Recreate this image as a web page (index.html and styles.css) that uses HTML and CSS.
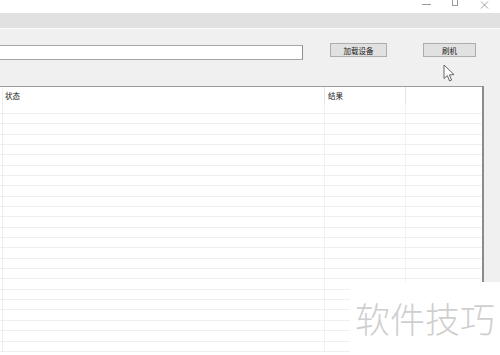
FILE: index.html
```html
<!DOCTYPE html>
<html lang="zh-CN">

<head>
    <meta charset="UTF-8">
    <meta name="viewport" content="width=device-width, initial-scale=1.0">
    <title>刷机工具</title>
    <link rel="stylesheet" href="styles.css">
</head>

<body>

    <div class="titlebar">
        <span class="ctl ctl-min"></span>
        <span class="ctl ctl-max"></span>
        <span class="ctl ctl-close">
            <svg width="9" height="8" viewBox="0 0 9 8">
                <path d="M1 0.5 L8 7.5 M8 0.5 L1 7.5" stroke="#8a8a8a" stroke-width="0.8" fill="none" />
            </svg>
        </span>
    </div>

    <div class="menubar"></div>

    <div class="toolbar">
        <input class="pfad" type="text">
        <button class="knapp knapp-laden">加载设备</button>
        <button class="knapp knapp-flash">刷机</button>
    </div>

    <div class="liste">
        <div class="kopf">
            <div class="spalte spalte-leer"></div>
            <div class="spalte spalte-status">状态</div>
            <div class="spalte spalte-ergebnis">结果</div>
            <div class="spalte spalte-rest"></div>
        </div>
        <div class="zeilen" id="zeilen"></div>
    </div>

    <!-- Mauszeiger über dem Knopf -->
    <svg class="zeiger" width="13" height="19" viewBox="0 0 13 19">
        <path d="M1 1 L1 14.5 L4.3 11.6 L6.6 17 L8.6 16.1 L6.4 10.9 L11 10.6 Z" fill="#fff" stroke="#555"
            stroke-width="0.9" stroke-linejoin="round" />
    </svg>

    <div class="wasserzeichen">软件技巧</div>

    <script>
        // Leere Zeilen für die Liste
        let zeilen = document.getElementById("zeilen")
        for (let i = 0; i < 24; i++) {
            zeilen.innerHTML += '<div class="zeile"><div class="zelle zelle-leer"></div><div class="zelle zelle-status"></div><div class="zelle zelle-ergebnis"></div><div class="zelle zelle-rest"></div></div>'
        }
    </script>
</body>

</html>
```

FILE: styles.css
```css
body {
    margin: 0;
    width: 500px;
    height: 355px;
    overflow: hidden;
    background-color: #f0f0f0;
    font-family: "Noto Sans CJK SC", "Liberation Sans", sans-serif;
    font-size: 7.5px;
    color: #1a1a1a;
    position: relative;
}

.titlebar {
    height: 13px;
    background-color: #fff;
    display: flex;
    justify-content: flex-end;
    align-items: flex-start;
    gap: 20px;
    padding-right: 11px;
}

.ctl {
    width: 9px;
    height: 8px;
    display: block;
}

.ctl-min::after {
    content: "";
    display: block;
    margin-top: 4px;
    height: 1px;
    background-color: #9a9a9a;
}

.ctl-max::after {
    content: "";
    display: block;
    width: 6px;
    height: 6px;
    margin-left: 1px;
    border: 1px solid #9a9a9a;
    border-top: none;
    box-sizing: border-box;
}

.menubar {
    height: 15px;
    background-color: #e1e1e1;
    border-bottom: 1px solid #fbfbfb;
}

.toolbar {
    height: 57px;
    display: flex;
    align-items: flex-start;
}

.pfad {
    margin: 16px 0 0 -2px;
    width: 305px;
    height: 15px;
    box-sizing: border-box;
    border: 1px solid #a6a6a6;
    border-right-color: #8e8e8e;
    background-color: #fff;
    padding: 0;
}

.knapp {
    height: 14px;
    box-sizing: border-box;
    margin-top: 14px;
    padding: 0;
    border: 1px solid #adadad;
    background-color: #e1e1e1;
    font-family: "Noto Sans CJK SC", sans-serif;
    font-size: 7.5px;
    line-height: 11px;
    color: #1a1a1a;
}

.knapp-laden {
    margin-left: 27px;
    width: 57px;
}

.knapp-flash {
    margin-left: 36px;
    width: 53px;
}

.liste {
    width: 485px;
    height: 269px;
    overflow: hidden;
    margin-left: -1px;
    box-sizing: border-box;
    background-color: #fff;
    border: 1px solid #9c9c9c;
    border-bottom: none;
    border-right: 2px solid #8c8c8c;
}

.kopf {
    height: 16.6px;
    display: flex;
}

.spalte {
    box-sizing: border-box;
    padding: 4px 0 0 2px;
    line-height: 9px;
}

.spalte-leer,
.zelle-leer {
    width: 3px;
    border-right: 1px solid #eeeeee;
}

.spalte-status,
.zelle-status {
    width: 322px;
    border-right: 1px solid #e4e4e4;
}

.spalte-ergebnis,
.zelle-ergebnis {
    width: 81px;
    border-right: 1px solid #e4e4e4;
}

.spalte-ergebnis {
    padding-left: 3px;
}

.zelle-status,
.zelle-ergebnis {
    border-right-color: #f2f2f2;
}

.zeile {
    height: 10.35px;
    box-sizing: border-box;
    border-bottom: 1px solid #efefef;
    display: flex;
}

.zelle {
    box-sizing: border-box;
    height: 100%;
}

.zeiger {
    position: absolute;
    left: 443px;
    top: 64px;
}

.wasserzeichen {
    position: absolute;
    left: 350px;
    top: 282px;
    width: 150px;
    height: 73px;
    background-color: #fff;
    box-sizing: border-box;
    padding: 16px 0 0 5px;
    font-family: "Noto Sans CJK SC", sans-serif;
    font-size: 35px;
    font-weight: 300;
    line-height: 40px;
    color: #cfcfcf;
    white-space: nowrap;
}
```
